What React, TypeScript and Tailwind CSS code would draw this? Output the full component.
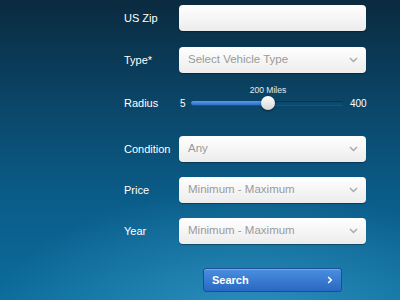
import React from 'react';

const fieldCls =
  'flex items-center justify-between w-[187px] h-[26px] rounded-[4px] bg-[linear-gradient(to_bottom,#ffffff,#ececec)] shadow-[0_1px_1px_rgba(0,0,0,0.35)] pl-[9px] pr-[8px]';

function Chevron() {
  return (
    <svg width="9" height="6" viewBox="0 0 9 6" className="shrink-0">
      <path d="M1 1 L4.5 4.5 L8 1" fill="none" stroke="#a8a8a8" strokeWidth="1.4" />
    </svg>
  );
}

function Row({ label, children, className = '' }: { label: string; children: React.ReactNode; className?: string }) {
  return (
    <div className={`flex items-center ${className}`}>
      <div className="w-[55px] text-[11px] text-white">{label}</div>
      {children}
    </div>
  );
}

function SelectField({ text }: { text: string }) {
  return (
    <div className={fieldCls}>
      <span className="text-[11.5px] text-[#9a9a9a]">{text}</span>
      <Chevron />
    </div>
  );
}

export default function App() {
  return (
    <div
      className="w-[400px] h-[300px] overflow-hidden bg-[radial-gradient(ellipse_65%_45%_at_62%_108%,rgba(60,160,205,0.7)_0%,rgba(14,118,168,0)_100%),linear-gradient(to_bottom,#0a2a3f_0%,#0b4668_35%,#0a5c88_65%,#0c6c9c_100%)]"
      style={{ fontFamily: '"Liberation Sans", Arial, sans-serif' }}
    >
      <div className="flex flex-col pl-[124px] pt-[5px]">
        <Row label="US Zip">
          <div className={fieldCls} />
        </Row>
        <Row label="Type*" className="mt-[16px]">
          <SelectField text="Select Vehicle Type" />
        </Row>
        <Row label="Radius" className="mt-[17px] h-[26px]">
          <div className="flex items-center w-[190px] h-[26px]">
            <span className="text-[10px] text-white w-[11px] ml-[1px]">5</span>
            <div className="relative w-[152px] h-[4px] rounded-full bg-[#0a4b70] shadow-[inset_0_1px_1px_rgba(0,0,0,0.35),0_1px_0_rgba(255,255,255,0.08)]">
              <div className="absolute left-0 top-0 h-[4px] w-[77px] rounded-full bg-[linear-gradient(to_bottom,#5a9ae8,#2f6fce)]" />
              <div className="absolute left-[70px] top-[-5px] w-[14px] h-[14px] rounded-full bg-[linear-gradient(to_bottom,#ffffff,#d6d6d6)] shadow-[0_1px_2px_rgba(0,0,0,0.5)]" />
              <span className="absolute left-[77px] top-[-17px] -translate-x-1/2 whitespace-nowrap text-[8.5px] text-white/90">200 Miles</span>
            </div>
            <span className="text-[10px] text-white ml-[7px]">400</span>
          </div>
        </Row>
        <Row label="Condition" className="mt-[20px]">
          <SelectField text="Any" />
        </Row>
        <Row label="Price" className="mt-[15px]">
          <SelectField text="Minimum - Maximum" />
        </Row>
        <Row label="Year" className="mt-[15px]">
          <SelectField text="Minimum - Maximum" />
        </Row>
        <div className="mt-[24px] ml-[79px] flex items-center justify-between w-[139px] h-[24px] rounded-[3px] border border-[#1c4f8f] bg-[linear-gradient(to_bottom,#4a8fdf,#2a68c2)] shadow-[inset_0_1px_0_rgba(255,255,255,0.25)] pl-[8px] pr-[8px]">
          <span className="text-[11px] font-bold text-white">Search</span>
          <svg width="6" height="8" viewBox="0 0 6 8">
            <path d="M1.2 1 L4.2 4 L1.2 7" fill="none" stroke="#ffffff" strokeWidth="1.6" />
          </svg>
        </div>
      </div>
    </div>
  );
}
